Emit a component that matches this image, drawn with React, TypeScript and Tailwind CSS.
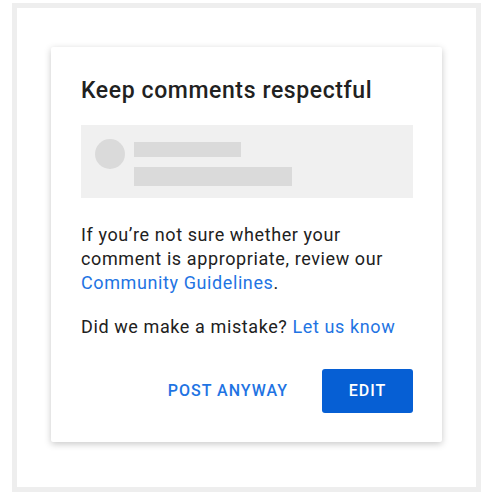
export default function App() {
  return (
    <div className="w-[500px] h-[498px] bg-white pt-[3px] pl-[12px] font-['Roboto',sans-serif] text-[#212121]">
      {/* outer frame */}
      <div className="w-[469px] h-[489px] border-[5px] border-[#eeeeee] pt-[39px] pl-[34px]">
        {/* dialog card */}
        <div className="w-[391px] h-[395px] bg-white rounded-[2px] shadow-[0_2px_7px_rgba(0,0,0,0.22)] pt-[30px] pl-[30px] pr-[29px] flex flex-col">
          <h2 className="text-[23px] leading-[28px] font-medium tracking-[0.6px]">Keep comments respectful</h2>

          {/* comment placeholder */}
          <div className="mt-[20px] h-[73px] bg-[#f0f0f0] flex items-start pl-[14px] pt-[14px] gap-[9px]">
            <div className="w-[30px] h-[30px] rounded-full bg-[#dadada]" />
            <div className="flex flex-col pt-[3px] gap-[10px]">
              <div className="w-[107px] h-[15px] bg-[#dadada]" />
              <div className="w-[158px] h-[19px] bg-[#dadada]" />
            </div>
          </div>

          <p className="mt-[25px] text-[18px] leading-[24px] tracking-[0.6px]">
            If you’re not sure whether your comment is appropriate, review our{" "}
            <a className="text-[#1f74e3]">Community Guidelines</a>.
          </p>
          <p className="mt-[20px] text-[18px] leading-[24px] tracking-[0.6px]">
            Did we make a mistake? <a className="text-[#1f74e3]">Let us know</a>
          </p>

          <div className="mt-[30px] flex justify-end items-center">
            <button className="text-[16px] font-medium tracking-[1px] text-[#1f74e3] mr-[34px]">POST ANYWAY</button>
            <button className="w-[91px] h-[44px] rounded-[3px] bg-[#065fd4] text-white text-[16px] font-medium tracking-[1px]">
              EDIT
            </button>
          </div>
        </div>
      </div>
    </div>
  );
}
